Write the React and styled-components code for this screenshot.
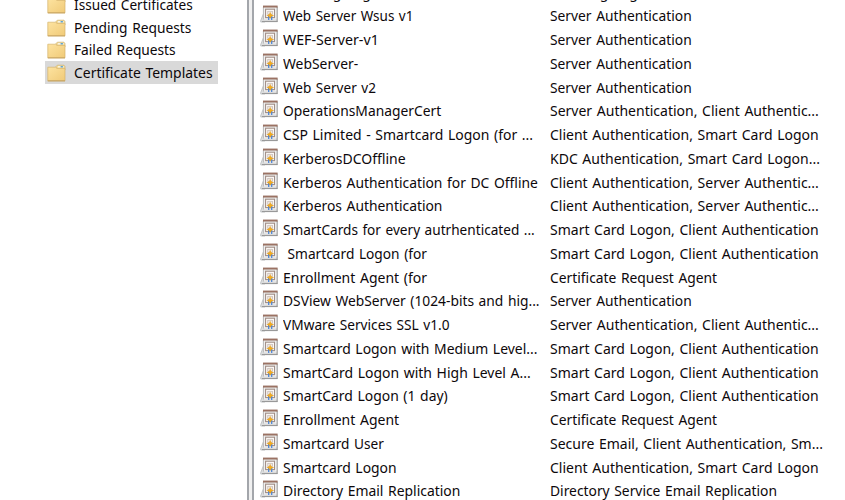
import React from 'react';
import styled, { createGlobalStyle } from 'styled-components';

const GlobalStyle = createGlobalStyle`
  html, body { margin: 0; background: #fff; }
  body { overflow: hidden; }
`;

const Window = styled.div`
  display: flex;
  width: 845px;
  height: 500px;
  overflow: hidden;
  background: #fff;
  color: #0d080b;
  font-family: 'Noto Sans', 'Open Sans', sans-serif;
  font-size: 14px;
  word-spacing: 1px;
`;

const Tree = styled.nav`
  box-sizing: border-box;
  width: 247px;
  margin-top: -6.4px;
  padding-left: 45px;
  display: flex;
  flex-direction: column;
  align-items: flex-start;
`;

const TreeItem = styled.div`
  display: flex;
  align-items: center;
  gap: 8px;
  box-sizing: border-box;
  height: 22.6px;
  width: 172.5px;
  padding-left: 2px;
  background: ${(p) => (p.$selected ? '#d9d9d9' : 'transparent')};
`;

const Splitter = styled.div`
  box-sizing: border-box;
  width: 7px;
  height: 500px;
  background: #f0f0f0;
  border-left: 2px solid #a3a6ab;
  border-right: 2px solid #a3a6ab;
`;

const List = styled.main`
  flex: 1;
  margin-top: -19.2px;
  padding-left: 6px;
`;

const Row = styled.div`
  display: grid;
  grid-template-columns: 23px 267px 1fr;
  align-items: center;
  height: 23.75px;
`;

const Label = styled.span`
  justify-self: start;
  white-space: pre;
  line-height: 20px;
  transform-origin: left center;
  transform: scaleX(${(p) => p.$fit || 1});
`;

const Icon = styled.svg`
  display: block;
  flex: none;
`;

const TemplateSvg = styled(Icon)`
  margin-bottom: 4px;
`;

function FolderIcon() {
  return (
    <Icon width="19" height="18" viewBox="0 0 19 18">
      <defs>
        <linearGradient id="folder" x1="0" y1="0" x2="1" y2="1">
          <stop offset="0" stopColor="#fde3a0" />
          <stop offset="1" stopColor="#f0ca78" />
        </linearGradient>
      </defs>
      <path d="M9 5 V2.6 L10.3 1.2 H17 L18 2.6 V6 H9 Z" fill="#f3da98" stroke="#cdb170" strokeWidth="0.7" />
      <rect x="11" y="2" width="5.6" height="1.6" fill="#f7f3e0" />
      <rect x="13.6" y="2" width="2.3" height="1.5" fill="#5fa4cf" />
      <path d="M0.8 3.2 H8.6 L10 4.4 H18 V16.8 H0.8 Z" fill="url(#folder)" stroke="#d5b36c" strokeWidth="0.7" />
      <path d="M0.8 16.9 H18" stroke="#c29c55" strokeWidth="0.9" />
    </Icon>
  );
}

function TemplateIcon() {
  return (
    <TemplateSvg width="18" height="18" viewBox="0 0 18 18">
      <path d="M3.5 8.5 L0.7 15.6 V17 H5 Z" fill="#dcdee0" stroke="#b0b3b6" strokeWidth="0.7" />
      <rect x="3" y="0.8" width="14.6" height="16.2" fill="#dadada" />
      <path d="M3.4 2 V14.5" fill="none" stroke="#b4b4b4" strokeWidth="0.8" />
      <path d="M17.1 2 V16.8 M2 16.6 H17.5" fill="none" stroke="#929292" strokeWidth="1" />
      <rect x="3" y="0.6" width="14.6" height="2" fill="#9b7263" />
      <rect x="4" y="2.8" width="12.4" height="11.7" fill="#efefef" />
      <rect x="5.6" y="4.2" width="8.9" height="8.4" fill="#fffdfb" stroke="#a08e86" strokeWidth="1.1" />
      <rect x="7.8" y="6.2" width="4.6" height="3.4" fill="#f0eae6" stroke="#b5a7a0" strokeWidth="0.6" />
      <path d="M8.7 11 V15 M11.7 11 V15" stroke="#4f86d6" strokeWidth="1.3" />
      <path d="M10.2 7.4 L11.2 9.5 L13.6 10.5 L11.2 11.5 L10.2 13.3 L9.2 11.5 L6.8 10.5 L9.2 9.5 Z" fill="#f4ad1e" stroke="#dc9722" strokeWidth="0.4" />
    </TemplateSvg>
  );
}

const tree = [
  ['Issued Certificates', 0.975],
  ['Pending Requests', 0.983],
  ['Failed Requests', 0.98],
  ['Certificate Templates', 0.995],
];

const SERVER = ['Server Authentication', 0.986];
const SERVER_CLIENT = ['Server Authentication, Client Authentic...', 1];
const CLIENT_CARD = ['Client Authentication, Smart Card Logon', 1];
const CLIENT_SERVER = ['Client Authentication, Server Authentic...', 1];
const CARD_CLIENT = ['Smart Card Logon, Client Authentication', 1];
const REQUEST_AGENT = ['Certificate Request Agent', 0.988];

const templates = [
  ['Code Signing', 1, ['Code Signing', 1]],
  ['Web Server Wsus v1', 0.963, SERVER],
  ['WEF-Server-v1', 1.015, SERVER],
  ['WebServer-', 0.99, SERVER],
  ['Web Server v2', 0.97, SERVER],
  ['OperationsManagerCert', 0.9875, SERVER_CLIENT],
  ['CSP Limited - Smartcard Logon (for ...', 0.997, CLIENT_CARD],
  ['KerberosDCOffline', 1, ['KDC Authentication, Smart Card Logon...', 1]],
  ['Kerberos Authentication for DC Offline', 0.99, CLIENT_SERVER],
  ['Kerberos Authentication', 0.99, CLIENT_SERVER],
  ['SmartCards for every autrhenticated ...', 0.973, CARD_CLIENT],
  [' Smartcard Logon (for', 0.98, CARD_CLIENT],
  ['Enrollment Agent (for', 1, REQUEST_AGENT],
  ['DSView WebServer (1024-bits and hig...', 0.985, SERVER],
  ['VMware Services SSL v1.0', 0.978, SERVER_CLIENT],
  ['Smartcard Logon with Medium Level...', 0.994, CARD_CLIENT],
  ['SmartCard Logon with High Level A...', 0.997, CARD_CLIENT],
  ['SmartCard Logon (1 day)', 0.994, CARD_CLIENT],
  ['Enrollment Agent', 1, REQUEST_AGENT],
  ['Smartcard User', 0.975, ['Secure Email, Client Authentication, Sm...', 1]],
  ['Smartcard Logon', 0.994, CLIENT_CARD],
  ['Directory Email Replication', 0.994, ['Directory Service Email Replication', 0.988]],
];

export default function App() {
  return (
    <Window>
      <GlobalStyle />
      <Tree>
        {tree.map(([label, fit], i) => (
          <TreeItem key={label} $selected={i === 3}>
            <FolderIcon />
            <Label $fit={fit}>{label}</Label>
          </TreeItem>
        ))}
      </Tree>
      <Splitter />
      <List>
        {templates.map(([name, fit, [purpose, purposeFit]]) => (
          <Row key={name}>
            <TemplateIcon />
            <Label $fit={fit}>{name}</Label>
            <Label $fit={purposeFit}>{purpose}</Label>
          </Row>
        ))}
      </List>
    </Window>
  );
}
